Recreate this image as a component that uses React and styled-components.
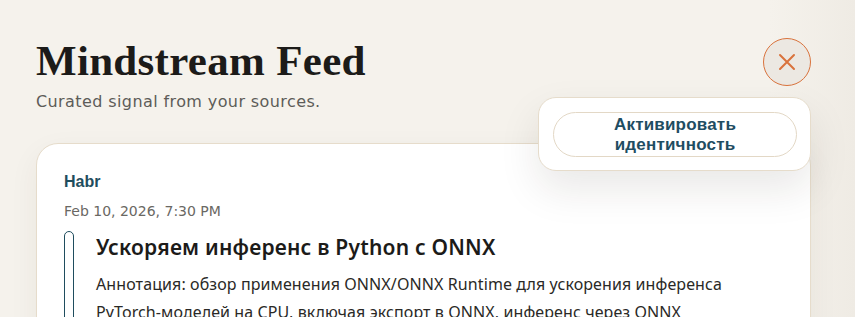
import styled, { createGlobalStyle } from "styled-components";

const GlobalStyle = createGlobalStyle`
  html, body {
    margin: 0;
    padding: 0;
    background: #f5f2ec;
  }
  body {
    font-family: "DejaVu Sans", sans-serif;
    overflow: hidden;
  }
`;

const Page = styled.div`
  min-height: 317px;
  padding: 38px 44px 0 36px;
  background: linear-gradient(90deg, #f5f2ec 0%, #f5f2ec 90%, #efebe4 100%);
  box-sizing: border-box;
`;

const Header = styled.header`
  position: relative;
  display: flex;
  justify-content: space-between;
  align-items: flex-start;
`;

const Title = styled.h1`
  margin: 0;
  font-family: "Liberation Serif", serif;
  font-weight: 700;
  font-size: 43px;
  line-height: 46px;
  color: #1c1b19;
  letter-spacing: 0.3px;
`;

const Subtitle = styled.p`
  margin: 7px 0 0;
  font-family: "DejaVu Sans", sans-serif;
  font-size: 16px;
  line-height: 22px;
  letter-spacing: 0.4px;
  color: #5d5c58;
`;

const CloseButton = styled.button`
  width: 48px;
  height: 48px;
  border-radius: 50%;
  border: 1.5px solid #d9733d;
  background: #ece8e2;
  display: flex;
  align-items: center;
  justify-content: center;
  padding: 0;
  cursor: pointer;
`;

const Menu = styled.div`
  position: absolute;
  top: 59px;
  right: 0;
  width: 273px;
  box-sizing: border-box;
  padding: 14px 13px 13px 14px;
  background: #fff;
  border: 1px solid #e6dccb;
  border-radius: 18px;
  box-shadow: 0 18px 40px rgba(40, 30, 20, 0.1);
  z-index: 2;
`;

const MenuButton = styled.button`
  width: 100%;
  height: 45px;
  border-radius: 999px;
  border: 1px solid #e3d8c6;
  background: #fff;
  padding: 0 36px;
  font-family: "Liberation Sans", Arial, sans-serif;
  font-weight: 700;
  font-size: 17px;
  line-height: 20px;
  letter-spacing: 0.2px;
  color: #1f4d62;
  cursor: pointer;
`;

const Card = styled.article`
  margin-top: 30px;
  background: #fff;
  border: 1px solid #e6dccb;
  border-radius: 22px;
  padding: 28px 27px 0;
  min-height: 200px;
  box-shadow: 0 10px 30px rgba(60, 45, 30, 0.06);
`;

const Source = styled.div`
  font-family: "Liberation Sans", Arial, sans-serif;
  font-weight: 700;
  font-size: 16px;
  line-height: 20px;
  color: #1f4d5e;
`;

const Date = styled.div`
  margin-top: 9px;
  font-family: "DejaVu Sans", sans-serif;
  font-size: 14px;
  line-height: 20px;
  color: #6a6863;
`;

const Entry = styled.div`
  display: flex;
  gap: 22px;
  margin-top: 10px;
`;

const Accent = styled.div`
  flex: 0 0 auto;
  width: 8px;
  min-height: 120px;
  border: 1.5px solid #1f4d5e;
  border-radius: 6px;
  background: #fff;
`;

const EntryBody = styled.div`
  flex: 1;
`;

const Heading = styled.h2`
  margin: 0;
  padding-top: 2px;
  font-family: "Noto Sans", sans-serif;
  font-weight: 600;
  font-size: 21px;
  line-height: 28px;
  letter-spacing: 0.2px;
  color: #1c1b19;
`;

const Summary = styled.p`
  margin: 9px 0 0;
  max-width: 684px;
  font-family: "Noto Sans", sans-serif;
  font-size: 16px;
  line-height: 28px;
  letter-spacing: 0.1px;
  color: #2a2926;
`;

export default function App() {
  return (
    <>
      <GlobalStyle />
      <Page>
        <Header>
          <div>
            <Title>Mindstream Feed</Title>
            <Subtitle>Curated signal from your sources.</Subtitle>
          </div>
          <CloseButton aria-label="Close">
            <svg width="20" height="20" viewBox="0 0 20 20" fill="none">
              <path
                d="M3 3 L17 17 M17 3 L3 17"
                stroke="#d9733d"
                strokeWidth="2"
                strokeLinecap="round"
              />
            </svg>
          </CloseButton>
          <Menu>
            <MenuButton>Активировать идентичность</MenuButton>
          </Menu>
        </Header>
        <Card>
          <Source>Habr</Source>
          <Date>Feb 10, 2026, 7:30 PM</Date>
          <Entry>
            <Accent />
            <EntryBody>
              <Heading>Ускоряем инференс в Python с ONNX</Heading>
              <Summary>
                Аннотация: обзор применения ONNX/ONNX Runtime для ускорения
                инференса PyTorch-моделей на CPU, включая экспорт в ONNX,
                инференс через ONNX
                <br />
                Runtime и сравнение производительности.
              </Summary>
            </EntryBody>
          </Entry>
        </Card>
      </Page>
    </>
  );
}
